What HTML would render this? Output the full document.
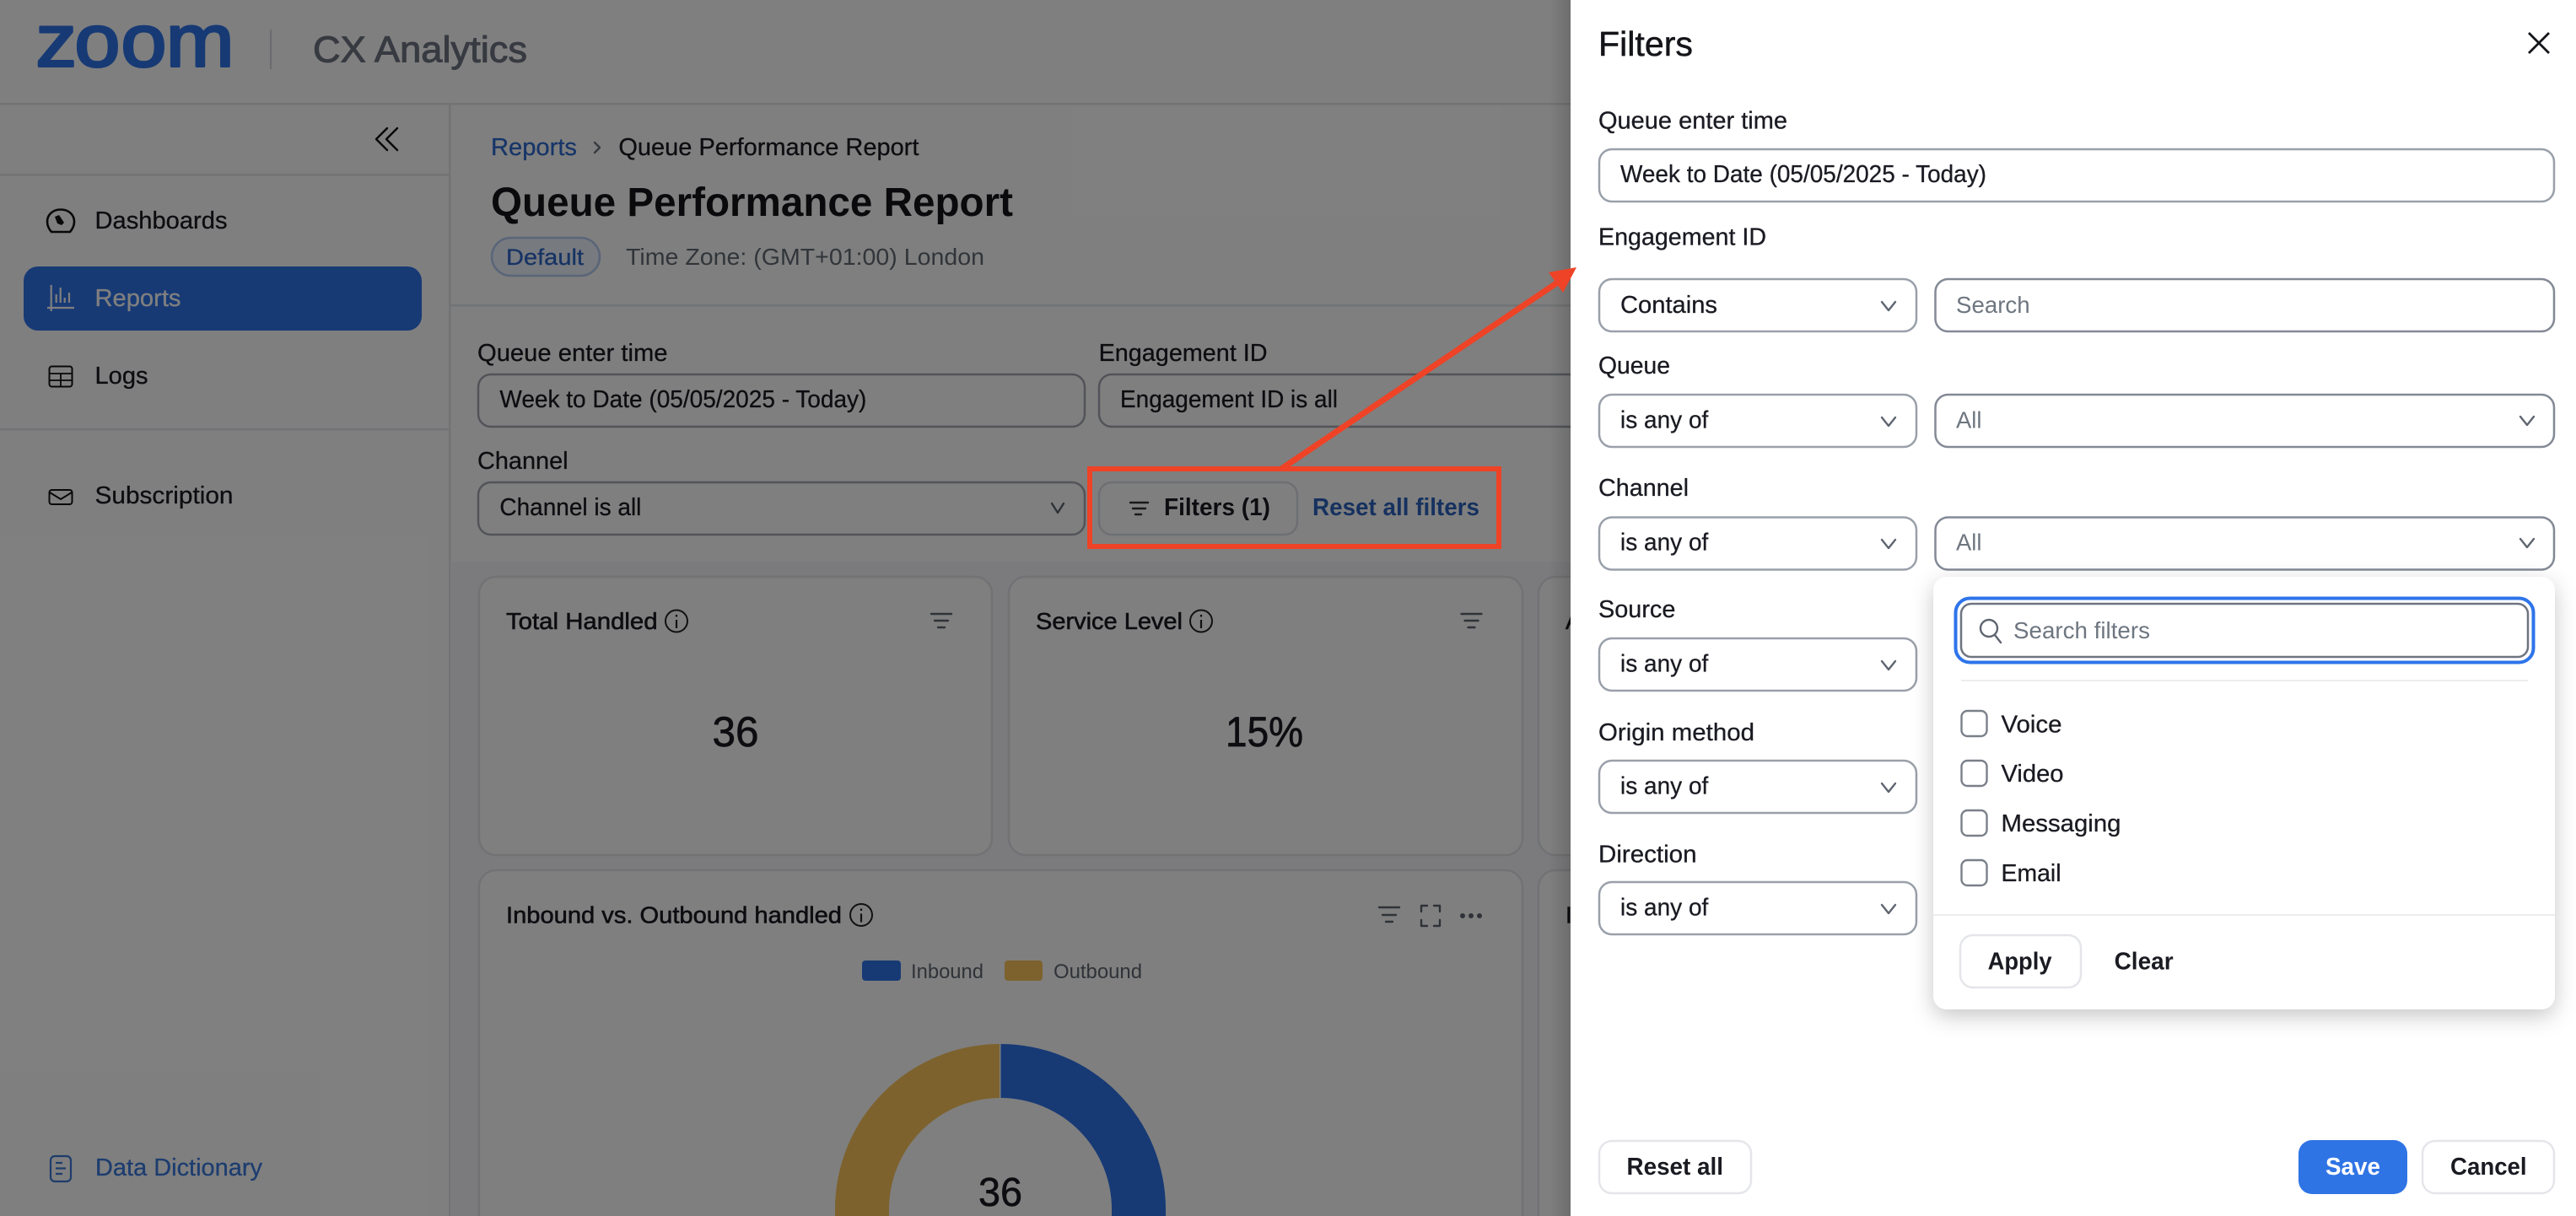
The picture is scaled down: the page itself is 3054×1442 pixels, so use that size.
<!DOCTYPE html>
<html lang="en">
<head>
<meta charset="utf-8">
<title>CX Analytics - Queue Performance Report</title>
<style>
html,body{margin:0;padding:0;background:#fff;width:3054px;height:1442px;overflow:hidden}
svg{display:block}
text{font-family:"Liberation Sans",Arial,sans-serif;white-space:pre}
.t{font-size:29px;fill:#1a1b22;stroke:#1a1b22;stroke-width:.3px}
.m{font-size:28px;fill:#1a1b22;stroke:#1a1b22;stroke-width:.6px}
.b{font-size:29px;font-weight:700;fill:#1a1b22}
.g{font-size:28px;fill:#6e7680}
.box{fill:#fff;stroke:#9aa0aa;stroke-width:2.5px}
.box2{fill:#fff;stroke:#838995;stroke-width:2.5px}
.box3{fill:#fff;stroke:#a4a8b2;stroke-width:2.5px}
.ln{fill:none;stroke:#5f6570;stroke-width:2.4px;stroke-linecap:round;stroke-linejoin:round}
.dk{fill:none;stroke:#111;stroke-width:2.6px;stroke-linecap:round;stroke-linejoin:round}
.card{fill:#fff;stroke:#e2e4e9;stroke-width:2.5px}
</style>
</head>
<body>
<svg xmlns="http://www.w3.org/2000/svg" width="3054" height="1442" viewBox="0 0 3054 1442">
  <defs>
    <clipPath id="main"><rect x="534" y="124" width="1328" height="1318"/></clipPath>
    <filter id="sh" x="-10%" y="-10%" width="120%" height="125%"><feDropShadow dx="0" dy="8" stdDeviation="13" flood-color="#000" flood-opacity=".22"/></filter>
    <linearGradient id="edge" x1="0" x2="1" y1="0" y2="0"><stop offset="0" stop-color="#000" stop-opacity="0"/><stop offset="1" stop-color="#000" stop-opacity=".14"/></linearGradient>
  </defs>

  <!-- page -->
  <rect width="3054" height="1442" fill="#fff"/>

  <!-- header -->
  <text transform="scale(1.1 1)" x="38.600 80.500 130.500 179" y="78.500" style="font-size:88px" fill="#2e74ea" stroke="#2e74ea" stroke-width="3" stroke-linejoin="round">zoom</text>
  <rect x="320" y="35" width="2" height="47" fill="#d5d7dc"/>
  <text x="371" y="73.500" style="font-size:44px" fill="#6e7482" stroke="#6e7482" stroke-width="1" textLength="254" lengthAdjust="spacingAndGlyphs">CX Analytics</text>
  <rect x="0" y="122" width="3054" height="2.500" fill="#e4e6ea"/>

  <!-- sidebar -->
  <rect x="532" y="124" width="2.500" height="1318" fill="#e4e6ea"/>
  <path class="dk" style="stroke-width:2.4px" d="M459 152 L446 165 L459 178 M471 152 L458 165 L471 178"/>
  <rect x="0" y="206" width="532" height="2.500" fill="#e4e6ea"/>

  <path class="dk" d="M61 275 C54 267 55 258 60 253 C66 247 78 247 84 253 C89 258 90 267 83 275 Z"/>
  <path d="M65 257 L70 255 L76 264 L73 267 L68 265 Z" fill="#111"/>
  <text class="t" x="112.500" y="271" textLength="157" lengthAdjust="spacingAndGlyphs">Dashboards</text>

  <rect x="28" y="316" width="472" height="76" rx="17" fill="#2e74ea"/>
  <g stroke="#fff" stroke-width="2.2" fill="none">
    <path d="M60.700 338 V369 M56 365 H88"/>
    <path d="M66.700 349 V359 M71.700 341 V359 M76.700 353 V359 M82 347 V359"/>
  </g>
  <text class="t" style="fill:#fff;stroke:#fff" x="112.500" y="363" textLength="102" lengthAdjust="spacingAndGlyphs">Reports</text>

  <rect x="58.500" y="434.500" width="27" height="24" rx="3" fill="none" stroke="#111" stroke-width="2"/>
  <path d="M58.500 443 H85.500 M58.500 451 H85.500 M72 443 V458" fill="none" stroke="#111" stroke-width="1.800"/>
  <text class="t" x="112.500" y="455" textLength="63" lengthAdjust="spacingAndGlyphs">Logs</text>

  <rect x="0" y="508" width="532" height="2.500" fill="#e4e6ea"/>

  <rect x="58.500" y="581" width="27" height="17" rx="3" fill="none" stroke="#111" stroke-width="2"/>
  <path d="M59 584 L72 592 L85 584" fill="none" stroke="#111" stroke-width="2"/>
  <text class="t" x="112.500" y="597" textLength="164" lengthAdjust="spacingAndGlyphs">Subscription</text>

  <rect x="60" y="1371" width="24" height="30" rx="5" fill="none" stroke="#3d79d8" stroke-width="2.2"/>
  <path d="M66 1379 H74 M66 1385.500 H78 M66 1392 H74" fill="none" stroke="#3d79d8" stroke-width="2.2"/>
  <text class="t" style="fill:#3a7adf;stroke:#3a7adf" x="113" y="1394" textLength="198" lengthAdjust="spacingAndGlyphs">Data Dictionary</text>

  <!-- report header -->
  <text class="t" style="fill:#2e6bd0;stroke:#2e6bd0" x="582" y="184" textLength="102" lengthAdjust="spacingAndGlyphs">Reports</text>
  <path class="ln" style="stroke:#6e7480" d="M705 169 L711 175 L705 181"/>
  <text class="t" x="733.400" y="184" textLength="356" lengthAdjust="spacingAndGlyphs">Queue Performance Report</text>
  <text x="582" y="256" style="font-size:48px" font-weight="700" fill="#141519" textLength="619" lengthAdjust="spacingAndGlyphs">Queue Performance Report</text>
  <rect x="583" y="282" width="128" height="45" rx="22.500" fill="#eef4fe" stroke="#b3cbf0" stroke-width="2.500"/>
  <text class="t" style="fill:#2e66c8;stroke:#2e66c8;font-size:27px" x="600" y="314" textLength="92" lengthAdjust="spacingAndGlyphs">Default</text>
  <text class="g" style="fill:#626a74" x="742" y="314" textLength="425" lengthAdjust="spacingAndGlyphs">Time Zone: (GMT+01:00) London</text>
  <rect x="534" y="361" width="1328" height="2.500" fill="#e4e6ea"/>

  <!-- filter bar -->
  <text class="t" x="566" y="428" textLength="225.500" lengthAdjust="spacingAndGlyphs">Queue enter time</text>
  <text class="t" x="1302.600" y="428" textLength="200" lengthAdjust="spacingAndGlyphs">Engagement ID</text>
  <rect class="box3" x="567" y="444" width="719" height="62" rx="15"/>
  <text class="t" x="592.400" y="483" textLength="435" lengthAdjust="spacingAndGlyphs">Week to Date (05/05/2025 - Today)</text>
  <rect class="box3" x="1303" y="444" width="700" height="62" rx="15"/>
  <text class="t" x="1328" y="483" textLength="258" lengthAdjust="spacingAndGlyphs">Engagement ID is all</text>
  <text class="t" x="566" y="556" textLength="107.600" lengthAdjust="spacingAndGlyphs">Channel</text>
  <rect class="box3" x="567" y="572" width="719" height="62" rx="15"/>
  <text class="t" x="592.400" y="611" textLength="168" lengthAdjust="spacingAndGlyphs">Channel is all</text>
  <path class="ln" d="M1247 597 L1254 608 L1261 597"/>
  <rect x="1303" y="572" width="235" height="62" rx="15" fill="#fff" stroke="#dcdfe4" stroke-width="2.500"/>
  <path class="ln" style="stroke:#333" d="M1340 596 H1361 M1343 603 H1358 M1346 610 H1353"/>
  <text class="b" x="1380" y="611" textLength="126" lengthAdjust="spacingAndGlyphs">Filters (1)</text>
  <text class="b" style="fill:#2c63bf" x="1556" y="611" textLength="198" lengthAdjust="spacingAndGlyphs">Reset all filters</text>

  <!-- dashboard -->
  <g clip-path="url(#main)">
    <rect x="534" y="666" width="1328" height="776" fill="#f6f7fb"/>
    <rect class="card" x="568" y="684" width="608" height="330" rx="20"/>
    <text class="m" x="600" y="746" textLength="179.600" lengthAdjust="spacingAndGlyphs">Total Handled</text>
    <circle cx="802" cy="736.500" r="13" fill="none" stroke="#222" stroke-width="2"/>
    <path d="M802 735 V745 M802 729 V731.500" stroke="#222" stroke-width="2.200" fill="none"/>
    <path class="ln" d="M1104 728 H1128 M1108 736 H1124 M1112 744 H1120"/>
    <text x="844.500" y="885" style="font-size:50px" fill="#1a1b22" stroke="#1a1b22" stroke-width=".7" textLength="55" lengthAdjust="spacingAndGlyphs">36</text>

    <rect class="card" x="1196" y="684" width="609" height="330" rx="20"/>
    <text class="m" x="1228" y="746" textLength="174" lengthAdjust="spacingAndGlyphs">Service Level</text>
    <circle cx="1424" cy="736.500" r="13" fill="none" stroke="#222" stroke-width="2"/>
    <path d="M1424 735 V745 M1424 729 V731.500" stroke="#222" stroke-width="2.200" fill="none"/>
    <path class="ln" d="M1732.500 728 H1756.500 M1736.500 736 H1752.500 M1740.500 744 H1748.500"/>
    <text x="1453" y="885" style="font-size:50px" fill="#1a1b22" stroke="#1a1b22" stroke-width=".7" textLength="92" lengthAdjust="spacingAndGlyphs">15%</text>

    <rect class="card" x="1824" y="684" width="600" height="330" rx="20"/>
    <text class="m" x="1856" y="746">Average</text>

    <rect class="card" x="568" y="1032" width="1237" height="430" rx="20"/>
    <text class="m" x="600" y="1094.600" textLength="398" lengthAdjust="spacingAndGlyphs">Inbound vs. Outbound handled</text>
    <circle cx="1021" cy="1085" r="13" fill="none" stroke="#222" stroke-width="2"/>
    <path d="M1021 1083.500 V1093.500 M1021 1077.500 V1080" stroke="#222" stroke-width="2.200" fill="none"/>
    <path class="ln" d="M1635 1076 H1659 M1639 1085 H1655 M1643 1093 H1651"/>
    <path class="ln" d="M1685 1081 V1074 H1692 M1700 1074 H1707 V1081 M1685 1091 V1098 H1692 M1707 1091 V1098 H1700"/>
    <g fill="#5f6570"><circle cx="1734" cy="1086" r="3"/><circle cx="1744" cy="1086" r="3"/><circle cx="1754" cy="1086" r="3"/></g>

    <rect x="1022" y="1139" width="46" height="24" rx="4" fill="#2e74ea"/>
    <text x="1080" y="1160" style="font-size:24px" fill="#5f6670" textLength="86" lengthAdjust="spacingAndGlyphs">Inbound</text>
    <rect x="1191" y="1139" width="45" height="24" rx="4" fill="#fac45c"/>
    <text x="1249" y="1160" style="font-size:24px" fill="#5f6670" textLength="105" lengthAdjust="spacingAndGlyphs">Outbound</text>

    <path d="M1186.500 1238 A196 196 0 0 1 1382 1434 V1460 H1318 V1434 A132 132 0 0 0 1186.500 1302 Z" fill="#2e74ea"/>
    <path d="M1185 1238 A196 196 0 0 0 990 1434 V1460 H1054 V1434 A132 132 0 0 1 1185 1302 Z" fill="#fac45c"/>
    <text x="1160" y="1430" style="font-size:48px" fill="#1a1b22" stroke="#1a1b22" stroke-width=".6" textLength="52" lengthAdjust="spacingAndGlyphs">36</text>

    <rect class="card" x="1824" y="1032" width="600" height="430" rx="20"/>
    <text class="m" x="1856" y="1094.600">Inbound</text>
  </g>

  <!-- modal overlay -->
  <rect width="3054" height="1442" fill="#000" fill-opacity=".5"/>
  <rect x="1836" y="0" width="26" height="1442" fill="url(#edge)"/>

  <!-- annotation box -->
  <rect x="1292" y="556" width="485" height="92" fill="none" stroke="#ee4326" stroke-width="6"/>

  <!-- filters panel -->
  <rect x="1862" y="0" width="1192" height="1442" fill="#fff"/>
  <text x="1895" y="66" style="font-size:41px" fill="#141519" stroke="#141519" stroke-width=".5" textLength="112" lengthAdjust="spacingAndGlyphs">Filters</text>
  <path d="M2998 39 L3022 63 M3022 39 L2998 63" fill="none" stroke="#141519" stroke-width="2.800"/>

  <text class="t" x="1895" y="152.600" textLength="224" lengthAdjust="spacingAndGlyphs">Queue enter time</text>
  <rect class="box" x="1896" y="177" width="1132" height="62" rx="15"/>
  <text class="t" x="1921" y="216" textLength="434" lengthAdjust="spacingAndGlyphs">Week to Date (05/05/2025 - Today)</text>

  <text class="t" x="1895" y="290.500" textLength="199" lengthAdjust="spacingAndGlyphs">Engagement ID</text>
  <rect class="box" x="1896" y="331" width="376" height="62" rx="15"/>
  <text class="t" x="1921" y="371" textLength="115" lengthAdjust="spacingAndGlyphs">Contains</text>
  <path class="ln" d="M2231 358 L2239 368 L2247 358"/>
  <rect class="box2" x="2294.500" y="331" width="733.500" height="62" rx="15"/>
  <text class="g" x="2319" y="371" textLength="87.600" lengthAdjust="spacingAndGlyphs">Search</text>

  <text class="t" x="1895" y="443" textLength="85" lengthAdjust="spacingAndGlyphs">Queue</text>
  <rect class="box" x="1896" y="468" width="376" height="62" rx="15"/>
  <text class="t" x="1921" y="507.400" textLength="104.300" lengthAdjust="spacingAndGlyphs">is any of</text>
  <path class="ln" d="M2231 495 L2239 505 L2247 495"/>
  <rect class="box2" x="2294.500" y="468" width="733.500" height="62" rx="15"/>
  <text class="g" x="2319" y="507.400" textLength="30.500" lengthAdjust="spacingAndGlyphs">All</text>
  <path class="ln" d="M2988 494 L2996 504 L3004 494"/>

  <text class="t" x="1895" y="588" textLength="107" lengthAdjust="spacingAndGlyphs">Channel</text>
  <rect class="box" x="1896" y="613.500" width="376" height="62" rx="15"/>
  <text class="t" x="1921" y="652.600" textLength="104.300" lengthAdjust="spacingAndGlyphs">is any of</text>
  <path class="ln" d="M2231 640 L2239 650 L2247 640"/>
  <rect class="box2" x="2294.500" y="613.500" width="733.500" height="62" rx="15"/>
  <text class="g" x="2319" y="652.600" textLength="30.500" lengthAdjust="spacingAndGlyphs">All</text>
  <path class="ln" d="M2988 639 L2996 649 L3004 639"/>

  <text class="t" x="1895" y="732" textLength="91.400" lengthAdjust="spacingAndGlyphs">Source</text>
  <rect class="box" x="1896" y="757" width="376" height="62" rx="15"/>
  <text class="t" x="1921" y="796.600" textLength="104.300" lengthAdjust="spacingAndGlyphs">is any of</text>
  <path class="ln" d="M2231 784 L2239 794 L2247 784"/>
  <rect class="box2" x="2294.500" y="757" width="733" height="62" rx="15"/>

  <text class="t" x="1895" y="878" textLength="185" lengthAdjust="spacingAndGlyphs">Origin method</text>
  <rect class="box" x="1896" y="902" width="376" height="62" rx="15"/>
  <text class="t" x="1921" y="941.400" textLength="104.300" lengthAdjust="spacingAndGlyphs">is any of</text>
  <path class="ln" d="M2231 929 L2239 939 L2247 929"/>
  <rect class="box2" x="2294.500" y="902" width="733" height="62" rx="15"/>

  <text class="t" x="1895" y="1022.500" textLength="116.500" lengthAdjust="spacingAndGlyphs">Direction</text>
  <rect class="box" x="1896" y="1046" width="376" height="62" rx="15"/>
  <text class="t" x="1921" y="1085.700" textLength="104.300" lengthAdjust="spacingAndGlyphs">is any of</text>
  <path class="ln" d="M2231 1073 L2239 1083 L2247 1073"/>
  <rect class="box2" x="2294.500" y="1046" width="733" height="62" rx="15"/>

  <!-- channel dropdown -->
  <rect x="2292" y="684" width="737" height="513" rx="16" fill="#fff" filter="url(#sh)"/>
  <rect x="2318.500" y="709.500" width="685" height="76" rx="17" fill="#fff" stroke="#2e74ea" stroke-width="4"/>
  <rect x="2325" y="716" width="672" height="63" rx="12" fill="#fff" stroke="#6e7480" stroke-width="2.500"/>
  <circle cx="2358" cy="745" r="10" fill="none" stroke="#5f6570" stroke-width="2.400"/>
  <path d="M2365 753 L2372 762" stroke="#5f6570" stroke-width="2.400" stroke-linecap="round"/>
  <text class="g" x="2387" y="757" textLength="162" lengthAdjust="spacingAndGlyphs">Search filters</text>
  <rect x="2325" y="806" width="672" height="2" fill="#ededf0"/>

  <g fill="#fff" stroke="#7a808a" stroke-width="2.400">
    <rect x="2325.500" y="843" width="30" height="30" rx="7"/>
    <rect x="2325.500" y="902" width="30" height="30" rx="7"/>
    <rect x="2325.500" y="961" width="30" height="30" rx="7"/>
    <rect x="2325.500" y="1020" width="30" height="30" rx="7"/>
  </g>
  <text class="t" x="2372.500" y="868.500" textLength="72" lengthAdjust="spacingAndGlyphs">Voice</text>
  <text class="t" x="2372.500" y="927" textLength="74" lengthAdjust="spacingAndGlyphs">Video</text>
  <text class="t" x="2372.500" y="986" textLength="142" lengthAdjust="spacingAndGlyphs">Messaging</text>
  <text class="t" x="2372.500" y="1045" textLength="71" lengthAdjust="spacingAndGlyphs">Email</text>
  <rect x="2292" y="1084" width="737" height="2" fill="#ededf0"/>

  <rect x="2324" y="1109" width="143" height="62" rx="15" fill="#fff" stroke="#e4e6ea" stroke-width="2.500"/>
  <text class="b" x="2356.600" y="1149.400" textLength="76" lengthAdjust="spacingAndGlyphs">Apply</text>
  <text class="b" x="2506.600" y="1149.400" textLength="70" lengthAdjust="spacingAndGlyphs">Clear</text>

  <!-- panel footer -->
  <rect x="1896" y="1353" width="180" height="62" rx="15" fill="#fff" stroke="#e4e6ea" stroke-width="2.500"/>
  <text class="b" x="1928.500" y="1393" textLength="114.500" lengthAdjust="spacingAndGlyphs">Reset all</text>
  <rect x="2725" y="1352" width="129" height="64" rx="16" fill="#2f74e5"/>
  <text class="b" style="fill:#fff" x="2757" y="1393" textLength="65" lengthAdjust="spacingAndGlyphs">Save</text>
  <rect x="2872" y="1353" width="156" height="62" rx="15" fill="#fff" stroke="#e4e6ea" stroke-width="2.500"/>
  <text class="b" x="2905" y="1393" textLength="90.600" lengthAdjust="spacingAndGlyphs">Cancel</text>

  <!-- annotation arrow -->
  <path d="M1519 556 L1848 334" stroke="#ee4326" stroke-width="7" fill="none"/>
  <path d="M1869 317 L1836 323 L1853 347 Z" fill="#ee4326"/>
</svg>
</body>
</html>
